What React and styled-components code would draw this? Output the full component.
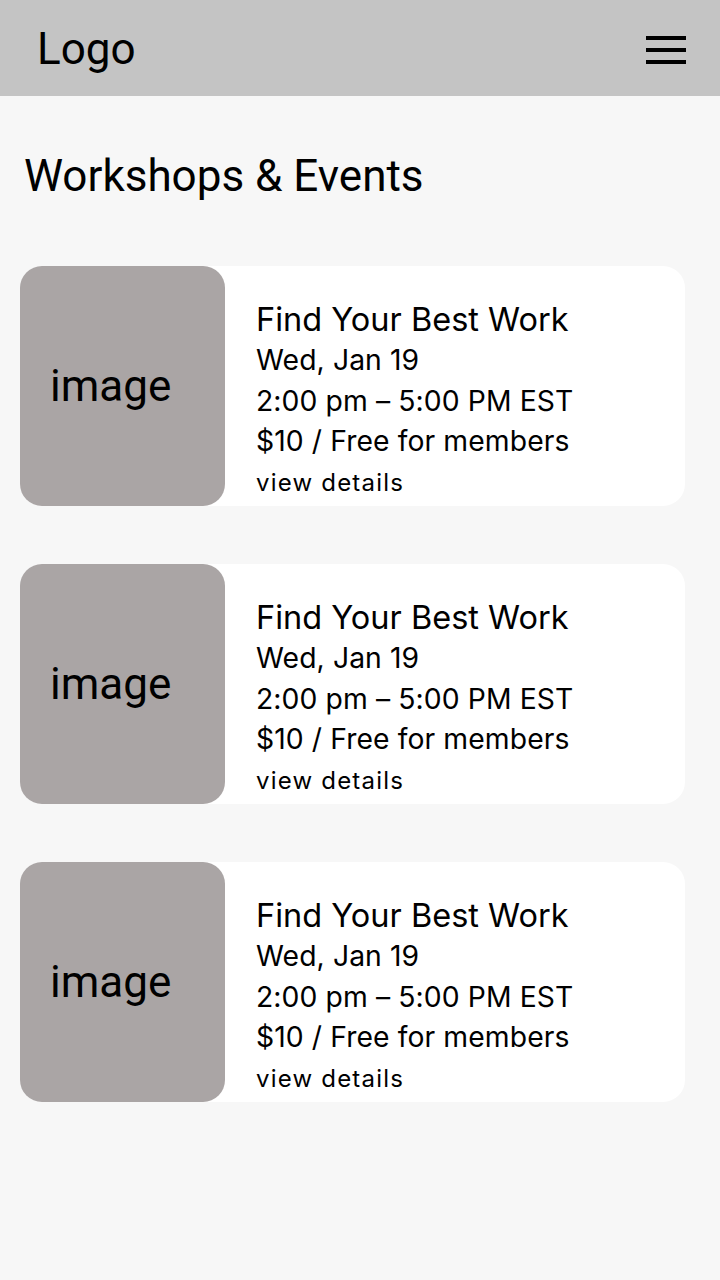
import React from 'react';
import styled, { createGlobalStyle } from 'styled-components';

const GlobalStyle = createGlobalStyle`
  html, body {
    margin: 0;
    padding: 0;
    background: #f7f7f7;
  }
  body {
    font-family: Roboto, "Liberation Sans", sans-serif;
    color: #000;
  }
`;

const Page = styled.div`
  width: 720px;
  min-height: 1280px;
  background: #f7f7f7;
`;

const Header = styled.header`
  height: 96px;
  background: #c4c4c4;
  display: flex;
  align-items: center;
  justify-content: space-between;
  padding: 0 34px 0 37px;
  box-sizing: border-box;
`;

const Logo = styled.div`
  font-family: Roboto, sans-serif;
  font-size: 44px;
  line-height: 1;
  margin-top: 2px;
`;

const Burger = styled.button`
  width: 40px;
  height: 28px;
  padding: 0;
  border: none;
  background: transparent;
  display: flex;
  flex-direction: column;
  justify-content: space-between;
  margin-top: 4px;
`;

const Bar = styled.span`
  display: block;
  height: 4px;
  width: 100%;
  background: #000;
`;

const Main = styled.main`
  padding: 54px 35px 0 20px;
`;

const Title = styled.h1`
  margin: 0 0 64px 4px;
  font-family: Roboto, sans-serif;
  font-weight: 400;
  font-size: 44px;
  line-height: 52px;
`;

const List = styled.div`
  display: flex;
  flex-direction: column;
  gap: 58px;
`;

const Card = styled.article`
  display: flex;
  height: 240px;
  background: #fff;
  border-radius: 22px;
`;

const Thumb = styled.div`
  width: 205px;
  flex-shrink: 0;
  background: #aaa5a5;
  border-radius: 22px;
  display: flex;
  align-items: center;
  padding-left: 30px;
  box-sizing: border-box;
  font-family: Roboto, sans-serif;
  font-size: 44px;
`;

const Info = styled.div`
  display: flex;
  flex-direction: column;
  padding-left: 31px;
  padding-top: 34px;
  font-family: Inter, "Noto Sans", sans-serif;
`;

const Name = styled.div`
  font-size: 32.5px;
  line-height: 40px;
`;

const Line = styled.div`
  font-size: 28.3px;
  line-height: 40.5px;
  letter-spacing: 0.1px;
`;

const Details = styled.a`
  font-size: 24px;
  line-height: 42px;
  letter-spacing: 1.2px;
  color: #000;
  text-decoration: none;
`;

const events = [1, 2, 3].map((id) => ({
  id,
  name: 'Find Your Best Work',
  date: 'Wed, Jan 19',
  time: '2:00 pm – 5:00 PM EST',
  price: '$10 / Free for members',
}));

export default function App() {
  return (
    <Page>
      <GlobalStyle />
      <Header>
        <Logo>Logo</Logo>
        <Burger aria-label="menu">
          <Bar />
          <Bar />
          <Bar />
        </Burger>
      </Header>
      <Main>
        <Title>Workshops &amp; Events</Title>
        <List>
          {events.map((ev) => (
            <Card key={ev.id}>
              <Thumb>image</Thumb>
              <Info>
                <Name>{ev.name}</Name>
                <Line>{ev.date}</Line>
                <Line>{ev.time}</Line>
                <Line>{ev.price}</Line>
                <Details href="#">view details</Details>
              </Info>
            </Card>
          ))}
        </List>
      </Main>
    </Page>
  );
}
